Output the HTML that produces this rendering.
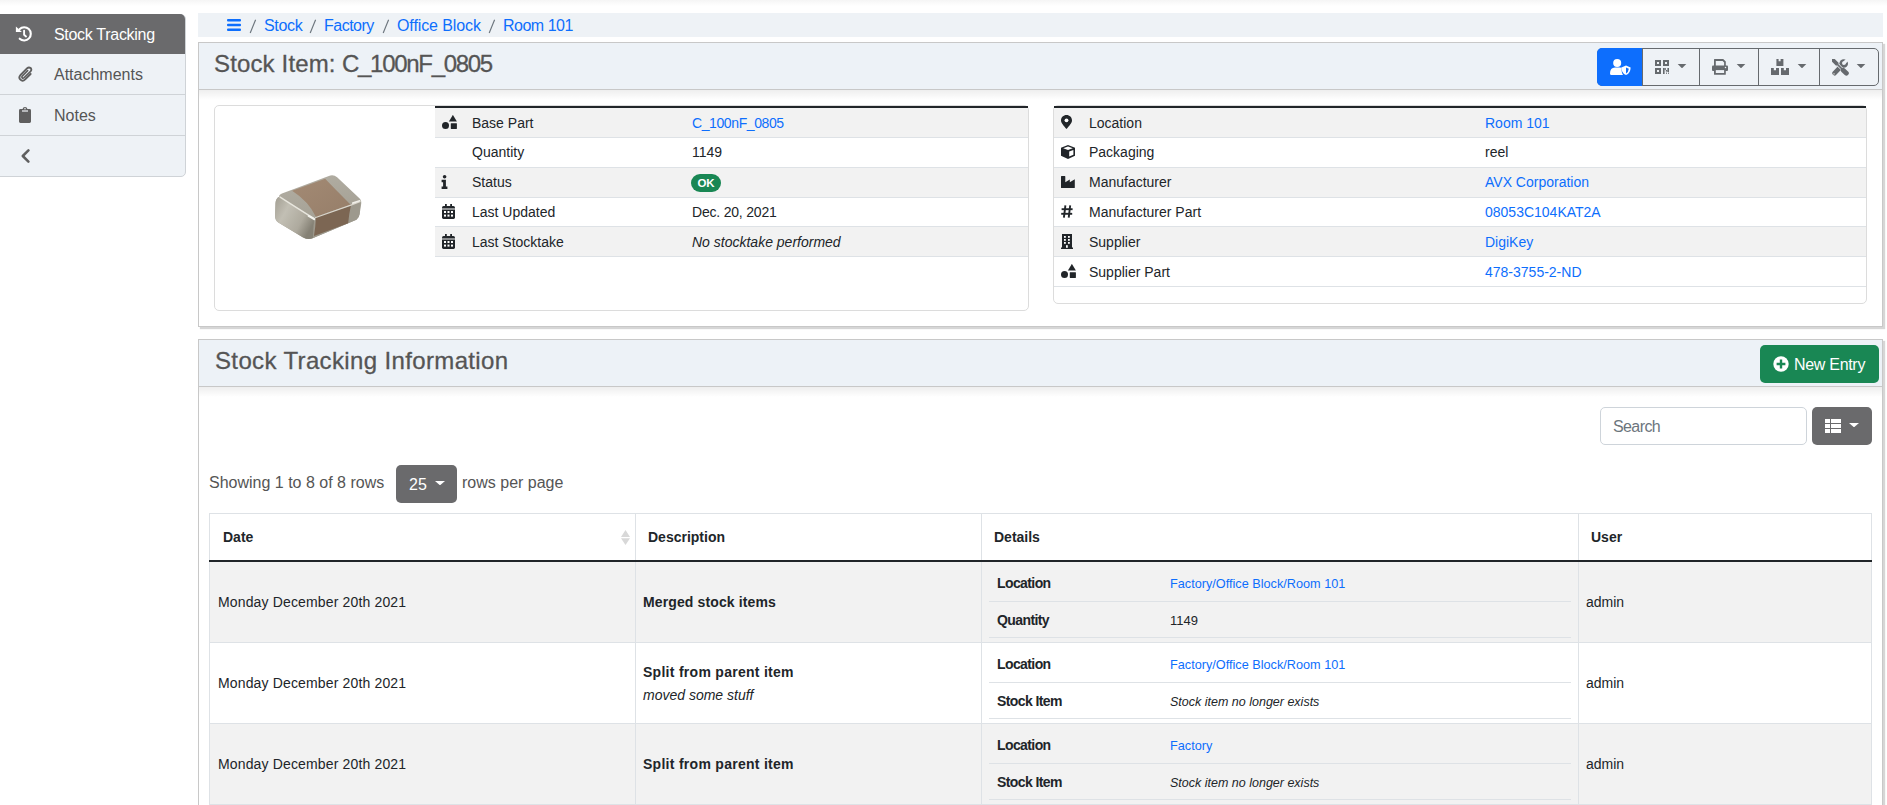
<!DOCTYPE html>
<html><head><meta charset="utf-8">
<style>
*{box-sizing:border-box;margin:0;padding:0}
html,body{width:1887px;height:805px;overflow:hidden;background:#fff;font-family:"Liberation Sans",sans-serif;color:#212529;position:relative}
.a{position:absolute;white-space:nowrap}
.topshadow{left:0;top:0;width:1887px;height:6px;background:linear-gradient(#f5f5f5,#fff)}
/* sidebar */
.side{left:-2px;top:14px;width:188px;height:163px;background:#eef2f6;border:1px solid #cfd3d7;border-radius:0 5px 5px 0;overflow:hidden}
.side-act{left:0;top:14px;width:185px;height:40px;background:#6a6a6c;border-radius:0 5px 0 0}
.sline{left:0;width:185px;height:1px;background:#cfd3d7}
.stxt{font-size:16px;line-height:20px;color:#555}
/* breadcrumb */
.crumb{left:198px;top:13px;width:1685px;height:24px;background:#eef2f6}
.ctxt{font-size:16px;line-height:20px;color:#0d6efd}
.csep{font-size:16px;line-height:20px;color:#6c757d;margin-top:1.5px}
/* panel */
.panel{background:#fff;border:1px solid #c8c8c8;box-shadow:2px 2px 1px rgba(0,0,0,0.16)}
.phead{background:#edf2f7;border-bottom:1px solid #c8c8c8}
.pshadow{height:10px;background:linear-gradient(rgba(0,0,0,0.065),rgba(0,0,0,0))}
.ptitle{font-size:24px;line-height:30px;color:#555;-webkit-text-stroke:0.3px #555}
.card{border:1px solid #dcdcdc;border-radius:5px;background:#fff}
.row{height:30px;border-bottom:1px solid #dee2e6}
.odd{background:#f2f2f2}
.t14{font-size:14px;line-height:20px}
.lnk{color:#0d6efd}
.blk{background:#212529;height:2px}
.vl{width:1px;background:#dee2e6}
</style></head><body>
<div class="a topshadow"></div>

<!-- SIDEBAR -->
<div class="a side"></div>
<div class="a side-act"></div>
<div class="a sline" style="top:94px"></div>
<div class="a sline" style="top:135px"></div>
<div class="a stxt" style="left:54px;top:25px;color:#fff;letter-spacing:-0.3px">Stock Tracking</div>
<div class="a stxt" style="left:54px;top:65px">Attachments</div>
<div class="a stxt" style="left:54px;top:106px">Notes</div>


<svg class="a" style="left:15px;top:26px" width="18" height="17" viewBox="0 0 18 17"><path d="M4.5 3.2 A6.6 6.6 0 1 1 4.7 12.7" stroke="#fff" stroke-width="2.1" fill="none" stroke-linecap="round"/><path d="M0.9 0.4 L6.9 5.9 H0.9 Z" fill="#fff"/><path d="M9.1 4.6 V8.8 L11 10.4" stroke="#fff" stroke-width="1.9" fill="none" stroke-linecap="round" stroke-linejoin="round"/></svg>
<svg class="a" style="left:18px;top:66px" width="16" height="16" viewBox="0 0 16 16"><path d="M12.6 2.2 Q11 0.6 9.2 2.2 L2.6 8.8 Q0.2 11.4 2.4 13.6 Q4.6 15.8 7.2 13.4 L12.6 8" stroke="#5f5f5f" stroke-width="1.9" fill="none" stroke-linecap="round"/><path d="M12.6 2.2 Q14.2 3.8 12.6 5.4 L6.2 11.6 Q5 12.6 4.2 11.8 Q3.4 11 4.4 9.8 L9.6 4.6" stroke="#5f5f5f" stroke-width="1.7" fill="none" stroke-linecap="round"/></svg>
<svg class="a" style="left:19px;top:107px" width="12" height="16" viewBox="0 0 12 16"><path d="M1.4 2 H3.6 Q3.8 0 6 0 Q8.2 0 8.4 2 H10.6 Q12 2 12 3.4 V14.6 Q12 16 10.6 16 H1.4 Q0 16 0 14.6 V3.4 Q0 2 1.4 2 Z" fill="#5f5f5f"/><rect x="3" y="3.4" width="6" height="1.2" fill="#eef2f6"/><circle cx="6" cy="1.8" r="0.8" fill="#eef2f6"/></svg>
<svg class="a" style="left:21px;top:149px" width="9" height="14" viewBox="0 0 9 14"><path d="M7.4 1.4 L1.8 7 L7.4 12.6" stroke="#5f5f5f" stroke-width="2.5" fill="none" stroke-linecap="round" stroke-linejoin="round"/></svg>

<!-- BREADCRUMB -->
<div class="a crumb"></div>
<div class="a ctxt" style="left:264px;top:16px;letter-spacing:-0.3px">Stock</div>
<svg class="a" style="left:249px;top:19px" width="8" height="15" viewBox="0 0 8 15"><path d="M1.2 14 L6.6 0.8" stroke="#6c757d" stroke-width="1.15"/></svg>
<div class="a ctxt" style="left:324px;top:16px;letter-spacing:-0.5px">Factory</div>
<svg class="a" style="left:309px;top:19px" width="8" height="15" viewBox="0 0 8 15"><path d="M1.2 14 L6.6 0.8" stroke="#6c757d" stroke-width="1.15"/></svg>
<svg class="a" style="left:382px;top:19px" width="8" height="15" viewBox="0 0 8 15"><path d="M1.2 14 L6.6 0.8" stroke="#6c757d" stroke-width="1.15"/></svg>
<div class="a ctxt" style="left:397px;top:16px;letter-spacing:-0.1px">Office Block</div>
<svg class="a" style="left:488px;top:19px" width="8" height="15" viewBox="0 0 8 15"><path d="M1.2 14 L6.6 0.8" stroke="#6c757d" stroke-width="1.15"/></svg>
<div class="a ctxt" style="left:503px;top:16px;letter-spacing:-0.5px">Room 101</div>
<svg class="a" style="left:227px;top:19px" width="14" height="12" viewBox="0 0 14 12"><rect x="0" y="0" width="14" height="2.4" rx="1" fill="#0d6efd"/><rect x="0" y="4.8" width="14" height="2.4" rx="1" fill="#0d6efd"/><rect x="0" y="9.6" width="14" height="2.4" rx="1" fill="#0d6efd"/></svg>

<!-- PANEL 1 -->
<div class="a panel" style="left:198px;top:42px;width:1685px;height:285px"></div>
<div class="a phead" style="left:199px;top:43px;width:1683px;height:47px"></div>
<div class="a pshadow" style="left:199px;top:90px;width:1683px"></div>
<div class="a ptitle" style="left:214px;top:49px;letter-spacing:0.15px">Stock Item:</div>
<div class="a ptitle" style="left:342px;top:49px;letter-spacing:-1.3px">C_100nF_0805</div>

<div class="a" style="left:1597px;top:48px;width:282px;height:38px;border:1px solid #666a6e;border-radius:5px;background:#eef2f6"></div>
<div class="a" style="left:1597px;top:48px;width:46px;height:38px;border-radius:5px 0 0 5px;background:#0d6efd"></div>
<div class="a" style="left:1642px;top:48px;width:1px;height:38px;background:#666a6e"></div>
<div class="a" style="left:1699px;top:48px;width:1px;height:38px;background:#666a6e"></div>
<div class="a" style="left:1758px;top:48px;width:1px;height:38px;background:#666a6e"></div>
<div class="a" style="left:1819px;top:48px;width:1px;height:38px;background:#666a6e"></div>
<svg class="a" style="left:1610px;top:58px" width="21" height="17" viewBox="0 0 21 17"><circle cx="7.2" cy="4.9" r="4.0" fill="#fff"/><path d="M0 15.4 Q0 9.6 5 9.4 H9.6 Q11 9.4 11.6 9.8 V12.8 Q11.8 15.4 13 17 H1.4 Q0 17 0 15.4 Z" fill="#fff"/><path d="M16 7.6 L20.6 9.4 Q20.6 15 16 17 Q11.4 15 11.4 9.4 Z" fill="#fff"/><path d="M16 9.6 L18.8 10.8 Q18.6 14 16 15.4 Z" fill="#0d6efd"/></svg>
<svg class="a" style="left:1655px;top:60px" width="14" height="14" viewBox="0 0 14 14"><g fill="#666a6e"><path d="M0 0 H6 V6 H0 Z M2 2 V4 H4 V2 Z" fill-rule="evenodd"/><path d="M8 0 H14 V6 H8 Z M10 2 V4 H12 V2 Z" fill-rule="evenodd"/><path d="M0 8 H6 V14 H0 Z M2 10 V12 H4 V10 Z" fill-rule="evenodd"/><rect x="8" y="8" width="1.6" height="6"/><rect x="9.6" y="8" width="1.2" height="2"/><rect x="10.8" y="10" width="1.6" height="1.6"/><rect x="12.4" y="8" width="1.6" height="4"/><rect x="11" y="12.6" width="1" height="1.2"/><rect x="13" y="12.6" width="1" height="1.2"/></g></svg>
<svg class="a" style="left:1677px;top:64px" width="10" height="4.3" viewBox="0 0 10 5"><path d="M0 0 H10 L5 5 Z" fill="#666a6e"/></svg>
<svg class="a" style="left:1712px;top:59px" width="16" height="16" viewBox="0 0 16 16"><g fill="#666a6e"><path d="M2.6 0 H11.2 L13.8 2.6 V7 H2 V0.6 Q2 0 2.6 0 Z M3.8 1.9 V7 H12.1 V3.4 L10.6 1.9 Z" fill-rule="evenodd"/><path d="M1 6.4 H15 Q16 6.4 16 7.4 V11 Q16 11.9 15 11.9 H1 Q0 11.9 0 11 V7.4 Q0 6.4 1 6.4 Z"/><path d="M2 10.6 H13.8 V15.2 Q13.8 15.8 13.2 15.8 H2.6 Q2 15.8 2 15.2 Z"/></g><rect x="3.8" y="11.1" width="8.3" height="2.9" fill="#eef2f6"/><circle cx="13.5" cy="8.4" r="0.75" fill="#eef2f6"/></svg>
<svg class="a" style="left:1736px;top:64px" width="10" height="4.3" viewBox="0 0 10 5"><path d="M0 0 H10 L5 5 Z" fill="#666a6e"/></svg>
<svg class="a" style="left:1771px;top:59px" width="18" height="16" viewBox="0 0 18 16"><g fill="#666a6e"><path d="M5.4 0 H7.6 V2.2 H9.6 V0 H12.4 V7 H5.4 Z"/><path d="M0 9 H2.8 V11.2 H5 V9 H8 V16 H0 Z"/><path d="M10 9 H12.8 V11.2 H15 V9 H18 V16 H10 Z"/></g></svg>
<svg class="a" style="left:1797px;top:64px" width="10" height="4.3" viewBox="0 0 10 5"><path d="M0 0 H10 L5 5 Z" fill="#666a6e"/></svg>
<svg class="a" style="left:1832px;top:59px" width="17" height="17" viewBox="0 0 17 17"><defs><mask id="wm"><rect x="-2" y="-2" width="21" height="21" fill="#fff"/><circle cx="11.9" cy="4.1" r="1.9" fill="#000"/><path d="M10.9 3.1 L13 5.2 L18.5 -0.3 L16.4 -2.4 Z" fill="#000"/></mask></defs><g stroke="#666a6e" stroke-linecap="round" fill="none"><path d="M2.6 14.2 L7.4 9.2" stroke-width="4.6"/></g><circle cx="11.7" cy="4.5" r="4.3" fill="#666a6e" mask="url(#wm)"/><path d="M7.2 9.4 L10 6.2" stroke="#666a6e" stroke-width="3.4"/><path d="M0.6 1.6 L1.6 0.6 L6.4 5 L5 6.4 Z" fill="#666a6e"/><path d="M1.4 1.4 L5.4 5.4" stroke="#666a6e" stroke-width="3.8" stroke-linecap="round"/><path d="M5.4 5.4 L10 10" stroke="#eef2f6" stroke-width="3"/><path d="M5.2 5.2 L10 10" stroke="#666a6e" stroke-width="1.7"/><path d="M11.2 11.2 L14.4 14.2" stroke="#666a6e" stroke-width="4.8" stroke-linecap="round"/><circle cx="2" cy="14.8" r="0.9" fill="#b8b8b8"/></svg>
<svg class="a" style="left:1856px;top:64px" width="10" height="4.3" viewBox="0 0 10 5"><path d="M0 0 H10 L5 5 Z" fill="#666a6e"/></svg>

<div class="a card" style="left:214px;top:105px;width:815px;height:206px"></div>
<div class="a card" style="left:1053px;top:105px;width:814px;height:199px"></div>

<div class="a" style="left:435px;top:108px;width:593px;height:29px;background:#f2f2f2"></div><div class="a" style="left:435px;top:137px;width:593px;height:1px;background:#dee2e6"></div><div class="a" style="left:435px;top:138px;width:593px;height:29px;background:#fff"></div><div class="a" style="left:435px;top:167px;width:593px;height:1px;background:#dee2e6"></div><div class="a" style="left:435px;top:168px;width:593px;height:29px;background:#f2f2f2"></div><div class="a" style="left:435px;top:197px;width:593px;height:1px;background:#dee2e6"></div><div class="a" style="left:435px;top:198px;width:593px;height:28px;background:#fff"></div><div class="a" style="left:435px;top:226px;width:593px;height:1px;background:#dee2e6"></div><div class="a" style="left:435px;top:227px;width:593px;height:29px;background:#f2f2f2"></div><div class="a" style="left:435px;top:256px;width:593px;height:1px;background:#dee2e6"></div><div class="a blk" style="left:435px;top:106px;width:593px"></div><div class="a t14" style="left:472px;top:113px">Base Part</div><div class="a t14" style="left:472px;top:142px">Quantity</div><div class="a t14" style="left:472px;top:172px">Status</div><div class="a t14" style="left:472px;top:202px">Last Updated</div><div class="a t14" style="left:472px;top:232px">Last Stocktake</div><div class="a t14 lnk" style="left:692px;top:113px;letter-spacing:-0.4px">C_100nF_0805</div><div class="a t14" style="left:692px;top:142px">1149</div><div class="a" style="left:691px;top:174px;width:30px;height:18px;border-radius:9px;background:#198754;color:#fff;font-size:11.5px;font-weight:700;line-height:18px;text-align:center">OK</div><div class="a t14" style="left:692px;top:202px;letter-spacing:-0.2px">Dec. 20, 2021</div><div class="a t14" style="left:692px;top:232px;font-style:italic">No stocktake performed</div><svg class="a" style="left:442px;top:115px" width="15" height="14" viewBox="0 0 15 14"><path d="M10.7 0.2 Q10.9 0 11.1 0.2 L14.9 6.4 Q15 6.6 14.7 6.6 H7.1 Q6.8 6.6 6.9 6.4 Z" fill="#212529"/><circle cx="3.5" cy="10.5" r="3.5" fill="#212529"/><rect x="8.8" y="8.2" width="6.1" height="5.8" rx="0.4" fill="#212529"/></svg><svg class="a" style="left:441px;top:175px" width="7" height="14" viewBox="0 0 7 14"><circle cx="3.6" cy="1.8" r="1.8" fill="#212529"/><path d="M0.6 4.8 H4.9 V11.6 H6.4 V14 H0.6 V11.6 H2.1 V7.2 H0.6 Z" fill="#212529"/></svg><svg class="a" style="left:442px;top:204px" width="13" height="15" viewBox="0 0 13 15"><rect x="3" y="0" width="1.8" height="3" fill="#212529"/><rect x="8.2" y="0" width="1.8" height="3" fill="#212529"/><path d="M0 3.8 Q0 2 1.6 2 H11.4 Q13 2 13 3.8 V4.6 H0 Z" fill="#212529"/><path d="M0 5.6 H13 V13.6 Q13 15 11.6 15 H1.4 Q0 15 0 13.6 Z" fill="#212529"/><g fill="#fff"><rect x="2" y="7" width="2" height="2"/><rect x="5.5" y="7" width="2" height="2"/><rect x="9" y="7" width="2" height="2"/><rect x="2" y="10.6" width="2" height="2"/><rect x="5.5" y="10.6" width="2" height="2"/><rect x="9" y="10.6" width="2" height="2"/></g></svg><svg class="a" style="left:442px;top:234px" width="13" height="15" viewBox="0 0 13 15"><rect x="3" y="0" width="1.8" height="3" fill="#212529"/><rect x="8.2" y="0" width="1.8" height="3" fill="#212529"/><path d="M0 3.8 Q0 2 1.6 2 H11.4 Q13 2 13 3.8 V4.6 H0 Z" fill="#212529"/><path d="M0 5.6 H13 V13.6 Q13 15 11.6 15 H1.4 Q0 15 0 13.6 Z" fill="#212529"/><g fill="#fff"><rect x="2" y="7" width="2" height="2"/><rect x="5.5" y="7" width="2" height="2"/><rect x="9" y="7" width="2" height="2"/><rect x="2" y="10.6" width="2" height="2"/><rect x="5.5" y="10.6" width="2" height="2"/><rect x="9" y="10.6" width="2" height="2"/></g></svg>
<div class="a" style="left:1054px;top:108px;width:812px;height:29px;background:#f2f2f2"></div><div class="a" style="left:1054px;top:137px;width:812px;height:1px;background:#dee2e6"></div><div class="a" style="left:1054px;top:138px;width:812px;height:29px;background:#fff"></div><div class="a" style="left:1054px;top:167px;width:812px;height:1px;background:#dee2e6"></div><div class="a" style="left:1054px;top:168px;width:812px;height:29px;background:#f2f2f2"></div><div class="a" style="left:1054px;top:197px;width:812px;height:1px;background:#dee2e6"></div><div class="a" style="left:1054px;top:198px;width:812px;height:28px;background:#fff"></div><div class="a" style="left:1054px;top:226px;width:812px;height:1px;background:#dee2e6"></div><div class="a" style="left:1054px;top:227px;width:812px;height:29px;background:#f2f2f2"></div><div class="a" style="left:1054px;top:256px;width:812px;height:1px;background:#dee2e6"></div><div class="a" style="left:1054px;top:257px;width:812px;height:29px;background:#fff"></div><div class="a" style="left:1054px;top:286px;width:812px;height:1px;background:#dee2e6"></div><div class="a blk" style="left:1054px;top:106px;width:812px"></div><div class="a t14" style="left:1089px;top:113px">Location</div><div class="a t14 lnk" style="left:1485px;top:113px">Room 101</div><div class="a t14" style="left:1089px;top:142px">Packaging</div><div class="a t14" style="left:1485px;top:142px">reel</div><div class="a t14" style="left:1089px;top:172px">Manufacturer</div><div class="a t14 lnk" style="left:1485px;top:172px">AVX Corporation</div><div class="a t14" style="left:1089px;top:202px">Manufacturer Part</div><div class="a t14 lnk" style="left:1485px;top:202px">08053C104KAT2A</div><div class="a t14" style="left:1089px;top:232px">Supplier</div><div class="a t14 lnk" style="left:1485px;top:232px">DigiKey</div><div class="a t14" style="left:1089px;top:262px">Supplier Part</div><div class="a t14 lnk" style="left:1485px;top:262px">478-3755-2-ND</div><svg class="a" style="left:1061px;top:115px" width="11" height="15" viewBox="0 0 11 15"><path d="M5.5 0 C8.6 0 11 2.4 11 5.4 C11 7.8 8 11 5.5 14 C3 11 0 7.8 0 5.4 C0 2.4 2.4 0 5.5 0 Z" fill="#212529"/><circle cx="5.5" cy="5.3" r="1.9" fill="#fff"/></svg><svg class="a" style="left:1061px;top:145px" width="14" height="14" viewBox="0 0 14 14"><path d="M7 0 L14 2.8 V10.8 L7 14 L0 10.8 V2.8 Z" fill="#212529"/><path d="M2.2 3.2 L7 1.4 L11.8 3.2 L7 5 Z" fill="#fff"/><path d="M8.2 6.6 L12.4 5 V9.8 L8.2 11.6 Z" fill="#fff"/></svg><svg class="a" style="left:1061px;top:176px" width="14" height="12" viewBox="0 0 14 12"><path d="M0 0.6 Q0 0 0.6 0 H3.7 Q4.3 0 4.3 0.6 V6.2 L8.8 3.4 V6.2 L13.8 3.2 V11.4 Q13.8 12 13.2 12 H0.6 Q0 12 0 11.4 Z" fill="#212529"/></svg><svg class="a" style="left:1061px;top:205px" width="12" height="13" viewBox="0 0 12 13"><g stroke="#212529" stroke-width="1.9" fill="none"><path d="M4.4 0.3 L2.9 12.7"/><path d="M9.2 0.3 L7.7 12.7"/><path d="M0.6 4.2 H11.6"/><path d="M0.2 8.8 H11.2"/></g></svg><svg class="a" style="left:1061px;top:234px" width="12" height="15" viewBox="0 0 12 15"><path d="M1 0 H11 V13.6 H12 V15 H0 V13.6 H1 Z" fill="#212529"/><g fill="#fff"><rect x="3" y="2" width="1.8" height="1.8"/><rect x="7" y="2" width="1.8" height="1.8"/><rect x="3" y="5" width="1.8" height="1.8"/><rect x="7" y="5" width="1.8" height="1.8"/><rect x="3" y="8" width="1.8" height="1.8"/><rect x="7" y="8" width="1.8" height="1.8"/><rect x="5" y="11.2" width="1.8" height="2.6"/></g></svg><svg class="a" style="left:1061px;top:264px" width="15" height="14" viewBox="0 0 15 14"><path d="M10.7 0.2 Q10.9 0 11.1 0.2 L14.9 6.4 Q15 6.6 14.7 6.6 H7.1 Q6.8 6.6 6.9 6.4 Z" fill="#212529"/><circle cx="3.5" cy="10.5" r="3.5" fill="#212529"/><rect x="8.8" y="8.2" width="6.1" height="5.8" rx="0.4" fill="#212529"/></svg>
<svg class="a" style="left:270px;top:170px" width="96" height="74" viewBox="0 0 1044 805">
<defs>
<linearGradient id="cgl" x1="0" y1="0" x2="1" y2="0.6"><stop offset="0" stop-color="#a29e92"/><stop offset="0.35" stop-color="#c2bfb4"/><stop offset="0.75" stop-color="#aeaa9e"/><stop offset="1" stop-color="#858175"/></linearGradient>
<linearGradient id="cgt" x1="0" y1="0" x2="0.3" y2="1"><stop offset="0" stop-color="#b3afa4"/><stop offset="1" stop-color="#a19d91"/></linearGradient>
<linearGradient id="cgb" x1="0" y1="0" x2="1" y2="1"><stop offset="0" stop-color="#a38a74"/><stop offset="1" stop-color="#967e69"/></linearGradient>
</defs>
<path d="M100 290 Q95 270 130 255 L640 65 Q690 45 730 80 L975 310 Q1000 335 990 380 L975 480 Q970 520 940 540 L470 740 Q420 765 360 735 L90 570 Q55 545 55 500 L60 360 Q62 310 100 290 Z" fill="url(#cgt)"/>
<path d="M240 225 L600 95 Q700 200 880 380 Q690 440 500 510 Q420 340 240 225 Z" fill="url(#cgb)"/>
<path d="M100 290 Q230 370 480 525 L470 740 Q420 765 360 735 L90 570 Q55 545 55 500 L60 360 Q62 310 100 290 Z" fill="url(#cgl)"/>
<path d="M480 525 L985 345 L975 480 Q970 520 940 540 L470 740 Z" fill="#9d998d"/>
<path d="M500 512 L880 385 Q860 470 850 580 L478 718 Q495 620 500 512 Z" fill="#7c6653"/>
<path d="M110 295 Q250 385 480 530" stroke="#e8e6de" stroke-width="16" fill="none" stroke-linecap="round"/>
<path d="M490 520 L880 382 L985 342" stroke="#d9d6cc" stroke-width="12" fill="none"/>
<path d="M420 500 L480 535" stroke="#f4f3ee" stroke-width="22" stroke-linecap="round"/>
<path d="M900 360 L975 335" stroke="#f0efe9" stroke-width="18" stroke-linecap="round"/>
</svg>
<!-- PANEL 2 -->
<div class="a panel" style="left:198px;top:339px;width:1685px;height:500px"></div>
<div class="a phead" style="left:199px;top:340px;width:1683px;height:47px"></div>
<div class="a pshadow" style="left:199px;top:387px;width:1683px"></div>
<div class="a ptitle" style="left:215px;top:346px;letter-spacing:0.36px">Stock Tracking Information</div>


<div class="a" style="left:1760px;top:345px;width:119px;height:38px;border-radius:5px;background:#198754"></div>
<svg class="a" style="left:1773px;top:356px" width="16" height="16" viewBox="0 0 16 16"><circle cx="8" cy="8" r="7.7" fill="#fff"/><path d="M6.8 3.6 H9.2 V6.8 H12.4 V9.2 H9.2 V12.4 H6.8 V9.2 H3.6 V6.8 H6.8 Z" fill="#198754"/></svg>
<div class="a" style="left:1794px;top:355px;font-size:16px;line-height:20px;color:#fff;letter-spacing:-0.3px">New Entry</div>

<div class="a" style="left:1600px;top:407px;width:207px;height:38px;border:1px solid #ced4da;border-radius:5px;background:#fff"></div>
<div class="a" style="left:1613px;top:417px;font-size:16px;line-height:20px;color:#6c757d;letter-spacing:-0.6px">Search</div>
<div class="a" style="left:1812px;top:407px;width:60px;height:38px;border-radius:5px;background:#6a6a6c"></div>
<svg class="a" style="left:1825px;top:419px" width="16" height="14" viewBox="0 0 16 14"><g fill="#fff"><rect x="0" y="0" width="5" height="4"/><rect x="6" y="0" width="10" height="4"/><rect x="0" y="5" width="5" height="4"/><rect x="6" y="5" width="10" height="4"/><rect x="0" y="10" width="5" height="4"/><rect x="6" y="10" width="10" height="4"/></g></svg>
<svg class="a" style="left:1849px;top:423px" width="10" height="4.3" viewBox="0 0 10 5" preserveAspectRatio="none"><path d="M0 0 H10 L5 5 Z" fill="#fff"/></svg>

<div class="a" style="left:209px;top:473px;font-size:16px;line-height:20px;color:#555">Showing 1 to 8 of 8 rows</div>
<div class="a" style="left:396px;top:465px;width:61px;height:38px;border-radius:5px;background:#6a6a6c"></div>
<div class="a" style="left:409px;top:475px;font-size:16px;line-height:20px;color:#fff">25</div>
<svg class="a" style="left:435px;top:481px" width="10" height="4.3" viewBox="0 0 10 5" preserveAspectRatio="none"><path d="M0 0 H10 L5 5 Z" fill="#fff"/></svg>
<div class="a" style="left:462px;top:473px;font-size:16px;line-height:20px;color:#555">rows per page</div>
<div class="a" style="left:209px;top:513px;width:1663px;height:1px;background:#dee2e6"></div><div class="a" style="left:209px;top:513px;width:1px;height:300px;background:#dee2e6"></div><div class="a" style="left:1871px;top:513px;width:1px;height:300px;background:#dee2e6"></div><div class="a" style="left:210px;top:562px;width:1661px;height:80px;background:#f2f2f2"></div><div class="a" style="left:209px;top:642px;width:1663px;height:1px;background:#dee2e6"></div><div class="a" style="left:210px;top:643px;width:1661px;height:80px;background:#fff"></div><div class="a" style="left:209px;top:723px;width:1663px;height:1px;background:#dee2e6"></div><div class="a" style="left:210px;top:724px;width:1661px;height:80px;background:#f2f2f2"></div><div class="a" style="left:209px;top:804px;width:1663px;height:1px;background:#dee2e6"></div><div class="a" style="left:635px;top:513px;width:1px;height:300px;background:#dee2e6"></div><div class="a" style="left:981px;top:513px;width:1px;height:300px;background:#dee2e6"></div><div class="a" style="left:1578px;top:513px;width:1px;height:300px;background:#dee2e6"></div><div class="a blk" style="left:209px;top:560px;width:1663px"></div><div class="a" style="left:223px;top:527px;font-size:14px;line-height:20px;font-weight:700">Date</div><div class="a" style="left:648px;top:527px;font-size:14px;line-height:20px;font-weight:700">Description</div><div class="a" style="left:994px;top:527px;font-size:14px;line-height:20px;font-weight:700">Details</div><div class="a" style="left:1591px;top:527px;font-size:14px;line-height:20px;font-weight:700">User</div><svg class="a" style="left:621px;top:530px" width="9" height="15" viewBox="0 0 9 15"><path d="M4.5 0 L9 6.9 H0 Z" fill="#d8d8d8"/><path d="M0 8.2 H9 L4.5 15 Z" fill="#d8d8d8"/></svg><div class="a" style="left:218px;top:592px;font-size:14px;line-height:20px;letter-spacing:0.15px">Monday December 20th 2021</div><div class="a" style="left:643px;top:592px;font-size:14px;line-height:20px;font-weight:700;letter-spacing:0.12px">Merged stock items</div><div class="a" style="left:1586px;top:592px;font-size:14px;line-height:20px">admin</div><div class="a" style="left:989px;top:601px;width:582px;height:1px;background:#dee2e6"></div><div class="a" style="left:989px;top:637px;width:582px;height:1px;background:#dee2e6"></div><div class="a" style="left:997px;top:573px;font-size:14px;line-height:20px;font-weight:700;letter-spacing:-0.6px">Location</div><div class="a" style="left:1170px;top:574px;font-size:12.7px;line-height:20px;color:#0d6efd">Factory/Office Block/Room 101</div><div class="a" style="left:997px;top:610px;font-size:14px;line-height:20px;font-weight:700;letter-spacing:-0.6px">Quantity</div><div class="a" style="left:1170px;top:611px;font-size:13px;line-height:20px;">1149</div><div class="a" style="left:218px;top:673px;font-size:14px;line-height:20px;letter-spacing:0.15px">Monday December 20th 2021</div><div class="a" style="left:643px;top:662px;font-size:14px;line-height:20px;font-weight:700;letter-spacing:0.28px">Split from parent item</div><div class="a" style="left:643px;top:685px;font-size:14px;line-height:20px;font-style:italic">moved some stuff</div><div class="a" style="left:1586px;top:673px;font-size:14px;line-height:20px">admin</div><div class="a" style="left:989px;top:682px;width:582px;height:1px;background:#dee2e6"></div><div class="a" style="left:989px;top:718px;width:582px;height:1px;background:#dee2e6"></div><div class="a" style="left:997px;top:654px;font-size:14px;line-height:20px;font-weight:700;letter-spacing:-0.6px">Location</div><div class="a" style="left:1170px;top:655px;font-size:12.7px;line-height:20px;color:#0d6efd">Factory/Office Block/Room 101</div><div class="a" style="left:997px;top:691px;font-size:14px;line-height:20px;font-weight:700;letter-spacing:-0.6px">Stock Item</div><div class="a" style="left:1170px;top:692px;font-size:12.5px;line-height:20px;font-style:italic">Stock item no longer exists</div><div class="a" style="left:218px;top:754px;font-size:14px;line-height:20px;letter-spacing:0.15px">Monday December 20th 2021</div><div class="a" style="left:643px;top:754px;font-size:14px;line-height:20px;font-weight:700;letter-spacing:0.28px">Split from parent item</div><div class="a" style="left:1586px;top:754px;font-size:14px;line-height:20px">admin</div><div class="a" style="left:989px;top:763px;width:582px;height:1px;background:#dee2e6"></div><div class="a" style="left:989px;top:799px;width:582px;height:1px;background:#dee2e6"></div><div class="a" style="left:997px;top:735px;font-size:14px;line-height:20px;font-weight:700;letter-spacing:-0.6px">Location</div><div class="a" style="left:1170px;top:736px;font-size:12.7px;line-height:20px;color:#0d6efd">Factory</div><div class="a" style="left:997px;top:772px;font-size:14px;line-height:20px;font-weight:700;letter-spacing:-0.6px">Stock Item</div><div class="a" style="left:1170px;top:773px;font-size:12.5px;line-height:20px;font-style:italic">Stock item no longer exists</div>
</body></html>
